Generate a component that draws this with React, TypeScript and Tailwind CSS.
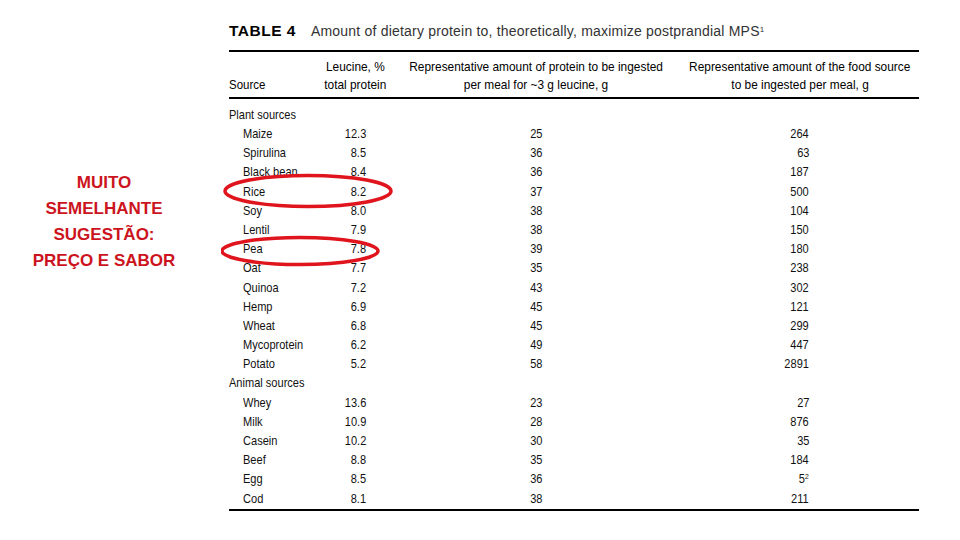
const plant: [string, string, string, string][] = [
  ["Maize", "12.3", "25", "264"],
  ["Spirulina", "8.5", "36", "63"],
  ["Black bean", "8.4", "36", "187"],
  ["Rice", "8.2", "37", "500"],
  ["Soy", "8.0", "38", "104"],
  ["Lentil", "7.9", "38", "150"],
  ["Pea", "7.8", "39", "180"],
  ["Oat", "7.7", "35", "238"],
  ["Quinoa", "7.2", "43", "302"],
  ["Hemp", "6.9", "45", "121"],
  ["Wheat", "6.8", "45", "299"],
  ["Mycoprotein", "6.2", "49", "447"],
  ["Potato", "5.2", "58", "2891"],
];

const animal: [string, string, string, string][] = [
  ["Whey", "13.6", "23", "27"],
  ["Milk", "10.9", "28", "876"],
  ["Casein", "10.2", "30", "35"],
  ["Beef", "8.8", "35", "184"],
  ["Egg", "8.5", "36", "5"],
  ["Cod", "8.1", "38", "211"],
];

// narrow look: no condensed font installed, so squeeze horizontally
const L = "inline-block origin-left scale-x-[0.85] whitespace-nowrap";
const R = "inline-block origin-right scale-x-[0.85] whitespace-nowrap";
const C = "inline-block origin-center scale-x-[0.88] whitespace-nowrap";

const Row = ({ r }: { r: [string, string, string, string] }) => (
  <div className="flex h-[19.2px] items-center">
    <div className="w-[90px] pl-[14px]">
      <span className={L}>{r[0]}</span>
    </div>
    <div className="w-[72px] pr-[25px] text-right">
      <span className={R}>{r[1]}</span>
    </div>
    <div className="ml-[10px] w-[270px] pr-[129px] text-right">
      <span className={R}>{r[2]}</span>
    </div>
    <div className="ml-[10px] w-[238px] pr-[110px] text-right">
      {r[0] === "Egg" ? (
        <span className={R}>
          5<sup className="text-[8px]">2</sup>
        </span>
      ) : (
        <span className={R}>{r[3]}</span>
      )}
    </div>
  </div>
);

export default function App() {
  return (
    <div className="flex h-[540px] w-[960px] bg-white">
      <div className="flex w-[208px] items-center justify-center pb-[96px] text-center">
        <p className="font-['Liberation_Sans',sans-serif] text-[17px] font-bold leading-[26px] text-[#cc1420]">
          MUITO
          <br />
          SEMELHANTE
          <br />
          SUGESTÃO:
          <br />
          PREÇO E SABOR
        </p>
      </div>
      <div className="relative ml-[21px] w-[690px] pt-[20px] text-[#222]">
        <div className="flex h-[22px] items-center gap-[15px] font-['Liberation_Sans',sans-serif]">
          <span className="text-[15.5px] font-bold tracking-[0.5px] text-black">TABLE 4</span>
          <span className="text-[14px] tracking-[0.2px] text-[#333]">
            Amount of dietary protein to, theoretically, maximize postprandial MPS
            <sup className="text-[8px]">1</sup>
          </span>
        </div>
        <div className="mt-[8px] h-[2px] bg-black" />
        <div className="flex pt-[6px] pb-[3px] font-['Liberation_Sans',sans-serif] text-[13.5px] leading-[18px] text-black">
          <div className="flex w-[90px] items-end">
            <span className={L}>Source</span>
          </div>
          <div className="flex w-[72px] flex-col items-center">
            <span className={C}>Leucine, %</span>
            <span className={C}>total protein</span>
          </div>
          <div className="ml-[10px] flex w-[270px] flex-col items-center">
            <span className={C}>Representative amount of protein to be ingested</span>
            <span className={C}>per meal for ~3 g leucine, g</span>
          </div>
          <div className="ml-[10px] flex w-[238px] flex-col items-center">
            <span className={C}>Representative amount of the food source</span>
            <span className={C}>to be ingested per meal, g</span>
          </div>
        </div>
        <div className="h-[2px] bg-black" />
        <div className="pt-[6px] font-['Liberation_Sans',sans-serif] text-[13px] text-[#111]">
          <div className="flex h-[19.2px] items-center">
            <span className={L}>Plant sources</span>
          </div>
          {plant.map((r) => (
            <Row key={r[0]} r={r} />
          ))}
          <div className="flex h-[19.2px] items-center">
            <span className={L}>Animal sources</span>
          </div>
          {animal.map((r) => (
            <Row key={r[0]} r={r} />
          ))}
        </div>
        <div className="mt-[1px] h-[2px] bg-black" />

        <svg className="pointer-events-none absolute left-[-8px] top-[150px]" width="180" height="130">
          <ellipse cx="87" cy="41" rx="83" ry="15.5" fill="none" stroke="#e0141c" strokeWidth="3.5" />
          <ellipse cx="79" cy="101" rx="78" ry="13.5" fill="none" stroke="#e0141c" strokeWidth="3.5" />
        </svg>
      </div>
    </div>
  );
}
